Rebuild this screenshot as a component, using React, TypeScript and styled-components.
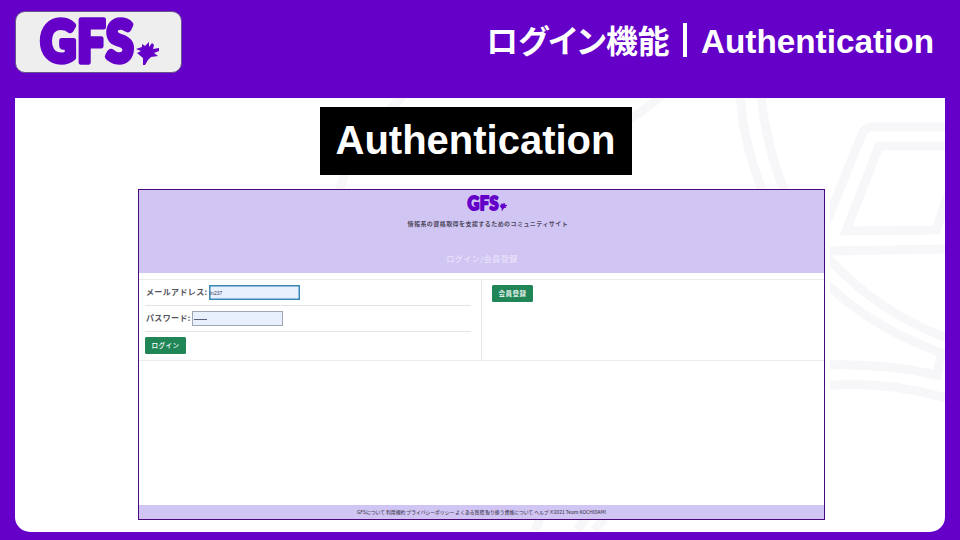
import React from "react";
import styled, { createGlobalStyle } from "styled-components";

const Global = createGlobalStyle`
  * { box-sizing: border-box; }
  body { margin: 0; background: #6400c8; }
`;

const Slide = styled.main`
  width: 960px;
  height: 540px;
  display: grid;
  grid-template-rows: 98px 434px;
  padding: 0 15px 8px;
  background: #6400c8;
  overflow: hidden;
  font-family: "Liberation Sans", "Noto Sans CJK JP", sans-serif;
`;
const Header = styled.header`
  display: flex;
  justify-content: space-between;
  align-items: flex-start;
  padding: 11px 11px 0 0;
`;
const LogoPlate = styled.div`
  width: 167px;
  height: 62px;
  border: 1px solid #67548c;
  border-radius: 10px;
  background: #eeeeee;
`;
const LogoSvg = styled.svg<{ $w: number; $h: number }>`
  display: block;
  width: ${(p) => p.$w}px;
  height: ${(p) => p.$h}px;
  overflow: visible;
`;
const Title = styled.h1`
  margin: 12px 0 0;
  display: flex;
  color: #fff;
  font-size: 33.3px;
  line-height: 38px;
  font-weight: 700;
  white-space: nowrap;
`;
const Kana = styled.span`
  font-family: "Noto Sans CJK JP", sans-serif;
  font-feature-settings: "palt";
  font-size: 31.8px;
  line-height: 32px;
  width: 182px;
`;
const Bar = styled.span`
  width: 4px;
  height: 34px;
  margin: 0 14px 0 15px;
  background: #fff;
`;
const Board = styled.section`
  position: relative;
  display: flex;
  flex-direction: column;
  align-items: flex-start;
  border-radius: 0 0 15px 15px;
  background: #fff;
  overflow: hidden;
`;
const Watermark = styled.svg`
  position: absolute;
  inset: 0;
  width: 930px;
  height: 434px;
`;
const Caption = styled.h2`
  position: relative;
  width: 312px;
  height: 68px;
  margin: 9px 0 0 304.5px;
  background: #000;
  color: #fff;
  font-size: 40px;
  line-height: 66px;
  text-align: center;
`;
const Shot = styled.article`
  position: relative;
  width: 687px;
  height: 331px;
  margin: 14px 0 0 123px;
  border: 1px solid #4b087e;
  background: #fff;
  box-shadow: 5px 0 0 #fff;
  display: grid;
  grid-template-rows: 83px 1fr 14px;
  font-family: "Noto Sans CJK JP", sans-serif;
  color: #41414a;
`;
const SiteHead = styled.div`
  display: flex;
  flex-direction: column;
  align-items: center;
  background: #d1c5f3;
  padding: 4px 0 0 11px;
`;
const Tagline = styled.div`
  width: 160px;
  margin: 8px 0 0 1px;
  font-size: 6px;
  line-height: 9px;
  font-weight: 700;
  color: #4f4a60;
  white-space: nowrap;
  letter-spacing: 0.44px;
`;
const PageName = styled.div`
  margin: 25px 10px 0 0;
  font-size: 8px;
  line-height: 12px;
  font-weight: 500;
  letter-spacing: 0.5px;
  color: #eae3fa;
  white-space: nowrap;
`;
const Columns = styled.div`
  display: grid;
  grid-template-columns: 343px 1fr;
  height: 82px;
  margin-top: 6px;
  border-top: 1px solid #ececef;
  border-bottom: 1px solid #ececef;
`;
const Column = styled.div<{ $rule?: boolean }>`
  padding: ${(p) => (p.$rule ? "0 10px 0 6px" : "5px 10px")};
  border-right: ${(p) => (p.$rule ? "1px solid #e8e8ec" : "0")};
`;
const Field = styled.label`
  display: flex;
  align-items: center;
  height: 26px;
  border-bottom: 1px solid #e4e4e8;
  font-size: 8px;
  font-weight: 700;
  color: #55555d;
  line-height: 12px;
  white-space: nowrap;
`;
const Label = styled.span<{ $w: number }>`
  width: ${(p) => p.$w}px;
  padding: 0 0 2px 1px;
  letter-spacing: 0.36px;
`;
const Input = styled.span<{ $focus?: boolean }>`
  width: 91px;
  height: 15px;
  border: 1px solid ${(p) => (p.$focus ? "#3788b5" : "#a0a5b5")};
  box-shadow: ${(p) => (p.$focus ? "inset 0 0 0 0.5px #3788b5" : "none")};
  background: #e8f0fe;
  color: #354052;
  font: 5px/14px "Liberation Sans", sans-serif;
  letter-spacing: 0;
`;
const Dots = styled.span`
  display: block;
  width: 13px;
  height: 1px;
  margin: 6.5px 0 0 1px;
  background: #56627b;
`;
const Button = styled.button`
  display: block;
  width: 41px;
  height: 17px;
  padding: 0;
  border: 0;
  border-radius: 1.5px;
  background: #218657;
  color: #fff;
  font: 500 6.5px/15px "Noto Sans CJK JP", sans-serif;
  letter-spacing: 0.5px;
`;
const LoginSlot = styled.div`
  padding-top: 5px;
`;
const SiteFoot = styled.footer`
  display: flex;
  justify-content: center;
  align-items: center;
  background: #d1c5f3;
`;
const FootText = styled.svg`
  width: 249px;
  height: 10px;
  overflow: visible;
  font: 500 5px "Noto Sans CJK JP", sans-serif;
  fill: #4d4860;
`;
const LogoOffset = styled.div`
  padding: 5px 0 0 23px;
`;

function Logo({ w, h }: { w: number; h: number }) {
  return (
    <LogoSvg $w={w} $h={h} viewBox="0 0 120 49" preserveAspectRatio="none" aria-label="GFS">
      <text
        x="1.5"
        y="45"
        textLength="94"
        lengthAdjust="spacingAndGlyphs"
        letterSpacing="1.5"
        fontFamily="Lato, sans-serif"
        fontWeight="900"
        fontSize="57"
        fill="#6400c8"
        stroke="#6400c8"
        strokeWidth="5.5"
        strokeLinejoin="round"
      >
        GFS
      </text>
      <path
        d="M97 32 L103 30 L103 27 L106 29 L110 25 L110 30 L113 26 L115 28 L114 32 L120 31 L120 34 L115 36 L119 39 L112 40 L109 43 L106 48 L104 48 L104 41 L98 36 L102 34Z"
        fill="#6400c8"
      />
    </LogoSvg>
  );
}

export default function App() {
  return (
    <Slide>
      <Global />
      <Header>
        <LogoPlate>
          <LogoOffset>
            <Logo w={120} h={49} />
          </LogoOffset>
        </LogoPlate>
        <Title>
          <Kana>ログイン機能</Kana>
          <Bar />
          <span>Authentication</span>
        </Title>
      </Header>
      <Board>
        <Watermark viewBox="15 98 930 434" fill="none" stroke="#f7f6f9" strokeWidth="9">
          <path d="M740 96 Q744 145 762 190 Q782 244 832 289 Q878 331 950 356" />
          <path d="M761 96 Q766 145 784 190 Q803 233 832 262 Q882 315 950 339" />
          <path d="M945 127 H872 Q865 127 862 134 L826 223" />
          <path d="M945 146 H879 L846 231 L936 230 L948 195" />
          <path d="M830 251 L945 249" />
          <path d="M825 365 Q885 363 937 375 L941 354" />
          <path d="M825 386 Q885 380 950 399" />
          <path d="M624 124 L662 96" />
          <path d="M340 190 Q350 145 403 96 M535 530 L540 519 M577 530 L585 519 M594 530 L605 519" />
        </Watermark>
        <Caption>Authentication</Caption>
        <Shot>
          <SiteHead>
            <Logo w={40} h={17} />
            <Tagline>情報系の資格取得を支援するためのコミュニティサイト</Tagline>
            <PageName>ログイン/会員登録</PageName>
          </SiteHead>
          <Columns>
            <Column $rule>
              <Field>
                <Label $w={64}>メールアドレス:</Label>
                <Input $focus>in237</Input>
              </Field>
              <Field>
                <Label $w={47}>パスワード:</Label>
                <Input><Dots /></Input>
              </Field>
              <LoginSlot><Button>ログイン</Button></LoginSlot>
            </Column>
            <Column><Button>会員登録</Button></Column>
          </Columns>
          <SiteFoot>
            <FootText viewBox="0 0 249 10">
              <text x="0" y="6.5" textLength="249" lengthAdjust="spacingAndGlyphs">GFSについて 利用規約 プライバシーポリシー よくある質問 取り扱う資格について ヘルプ ©2021 Team KOCHIDAMI</text>
            </FootText>
          </SiteFoot>
        </Shot>
      </Board>
    </Slide>
  );
}
